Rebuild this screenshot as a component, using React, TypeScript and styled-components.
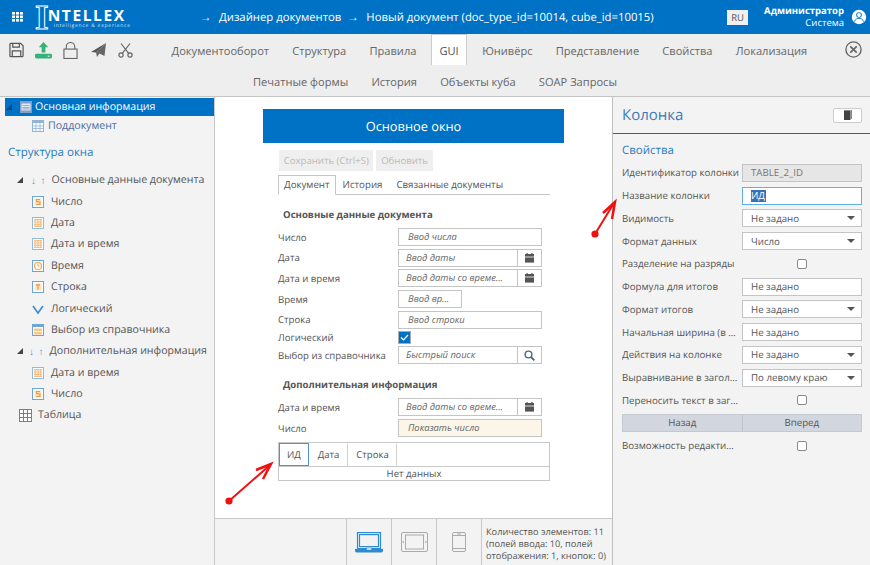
import styled, { createGlobalStyle } from "styled-components";
import { ReactNode } from "react";

const GlobalStyle = createGlobalStyle`
  html, body { margin: 0; padding: 0; }
  body {
    width: 870px;
    height: 565px;
    overflow: hidden;
    background: #fff;
    font-family: "Open Sans", "Liberation Sans", sans-serif;
    font-size: 10.6px;
    color: #555;
    text-rendering: geometricPrecision;
  }
`;

const BLUE = "#0072c6";

function AppsIcon() {
  return (
    <svg width="11" height="10" viewBox="0 0 11 10" fill="#fff">
      {[0, 4, 8].map((x) =>
        [0, 3.5, 7].map((y) => <rect key={`${x}-${y}`} x={x} y={y} width="3" height="2.6" />)
      )}
    </svg>
  );
}

function UserIcon() {
  return (
    <svg width="16" height="16" viewBox="0 0 16 16">
      <circle cx="8" cy="8" r="7.2" fill="#fff" />
      <circle cx="8" cy="6" r="2.8" fill={BLUE} />
      <circle cx="8" cy="6" r="1.9" fill="#fff" />
      <path d="M3.5 12.5c1-2.6 2.6-3.2 4.5-3.2s3.5.6 4.5 3.2" fill="none" stroke={BLUE} strokeWidth="1" />
    </svg>
  );
}

function SaveIcon() {
  return (
    <svg width="15" height="16" viewBox="0 0 16 17" fill="none" stroke="#555" strokeWidth="1.3">
      <path d="M1 2.5a1 1 0 0 1 1-1h10.5L15 4v10.5a1 1 0 0 1-1 1H2a1 1 0 0 1-1-1z" />
      <path d="M4 1.5v4h7v-4M3.5 15.5v-6h9v6" />
    </svg>
  );
}

function UploadIcon() {
  return (
    <svg width="17" height="17" viewBox="0 0 18 18" fill="#35b27a">
      <path d="M9 0l5 5.5h-3V11H7V5.5H4z" />
      <rect x="0" y="12.5" width="18" height="5" rx="1.5" />
      <rect x="13.5" y="14.5" width="2" height="1" fill="#fff" />
    </svg>
  );
}

function LockIcon() {
  return (
    <svg width="15" height="17" viewBox="0 0 16 18" fill="none" stroke="#666" strokeWidth="1.2">
      <rect x="1" y="7.5" width="14" height="10" />
      <path d="M3.5 7.5V5a4.5 4.5 0 0 1 9 0v2.5" />
    </svg>
  );
}

function SendIcon() {
  return (
    <svg width="16" height="14" viewBox="0 0 16 14">
      <path d="M15 0L0 9l5 .5L15 0z" fill="#555" />
      <path d="M15 0L5 9.5 6 14l2.5-3.5L13.5 13z" fill="#666" />
    </svg>
  );
}

function ScissorsIcon() {
  return (
    <svg width="15" height="15" viewBox="0 0 15 15" fill="none" stroke="#666" strokeWidth="1.2">
      <circle cx="3" cy="12" r="2.1" />
      <circle cx="12" cy="12" r="2.1" />
      <path d="M4.3 10.3L12 .5M10.7 10.3L3 .5" />
    </svg>
  );
}

function CloseIcon() {
  return (
    <svg width="17" height="17" viewBox="0 0 17 17" fill="none" stroke="#666" strokeWidth="1.4">
      <circle cx="8.5" cy="8.5" r="7.6" />
      <path d="M5.3 5.3l6.4 6.4M11.7 5.3l-6.4 6.4" strokeWidth="1.7" />
    </svg>
  );
}

function CalendarIcon() {
  return (
    <svg width="9" height="10" viewBox="0 0 9 10" fill="#555">
      <rect x="0" y="1" width="9" height="2.6" />
      <rect x="1.5" y="0" width="1.2" height="1.5" />
      <rect x="6.3" y="0" width="1.2" height="1.5" />
      <rect x="0" y="4.4" width="9" height="5.2" />
    </svg>
  );
}

function SearchIcon() {
  return (
    <svg width="11" height="11" viewBox="0 0 11 11" fill="none" stroke="#4a6a85" strokeWidth="1.4">
      <circle cx="4.5" cy="4.5" r="3.4" />
      <path d="M7 7l3.4 3.4" strokeWidth="1.8" />
    </svg>
  );
}

type NodeKind = "form" | "table" | "number" | "date" | "time" | "text" | "check" | "select" | "grid";

function NodeIcon({ kind }: { kind: NodeKind }) {
  if (kind === "check") {
    return (
      <svg width="12" height="12" viewBox="0 0 12 12" fill="none" stroke="#3d8fd1" strokeWidth="1.7">
        <path d="M1 3l5 7 5-7" />
      </svg>
    );
  }
  if (kind === "grid") {
    return (
      <svg width="13" height="13" viewBox="0 0 13 13" fill="#fff" stroke="#3d8fd1" strokeWidth="1">
        <rect x=".5" y=".5" width="12" height="12" />
        <path d="M4.5.5v12M8.5.5v12M.5 4.5h12M.5 8.5h12" />
      </svg>
    );
  }
  if (kind === "table") {
    return (
      <svg width="12" height="12" viewBox="0 0 12 12">
        <rect x="0" y="0" width="12" height="12" fill="#8fb4d8" />
        <rect x="1" y="3" width="10" height="8" fill="#fff" />
        <path d="M4 3v8M8 3v8M1 6h10M1 8.5h10" stroke="#8fb4d8" strokeWidth=".8" />
      </svg>
    );
  }
  if (kind === "form") {
    return (
      <svg width="12" height="12" viewBox="0 0 12 12">
        <rect x="0" y="0" width="12" height="12" fill="#7f9fc6" />
        <rect x="1.5" y="2.5" width="9" height="7" fill="#dfe8f3" />
        <path d="M2.5 4.5h7M2.5 6.5h7M2.5 8h7" stroke="#7f9fc6" strokeWidth=".8" />
      </svg>
    );
  }
  if (kind === "select") {
    return (
      <svg width="12" height="12" viewBox="0 0 12 12">
        <rect x=".5" y=".5" width="11" height="11" fill="#fff" stroke="#6aa6d8" />
        <rect x="1" y="1" width="10" height="2" fill="#6aa6d8" />
        <rect x="2" y="4.5" width="8" height="6" fill="#fbc48b" />
        <path d="M2 7.5h8" stroke="#fff" />
      </svg>
    );
  }
  if (kind === "time") {
    return (
      <svg width="12" height="12" viewBox="0 0 12 12" fill="none">
        <rect x=".5" y=".5" width="11" height="11" fill="#fff" stroke="#6aa6d8" />
        <circle cx="6" cy="6" r="3.5" stroke="#f3a65d" strokeWidth="1.2" />
        <path d="M6 4v2.2h1.6" stroke="#f3a65d" />
      </svg>
    );
  }
  if (kind === "date") {
    return (
      <svg width="12" height="12" viewBox="0 0 12 12">
        <rect x=".5" y=".5" width="11" height="11" fill="#fff" stroke="#8fbde2" />
        <path d="M2 2.7h8M2 5h8M2 7.3h8M2 9.5h8M3.2 2v8M6 2v8M8.8 2v8" stroke="#f9bd85" strokeWidth="1.2" />
      </svg>
    );
  }
  return (
    <svg width="12" height="12" viewBox="0 0 12 12">
      <rect x=".5" y=".5" width="11" height="11" fill="#fff" stroke="#6aa6d8" />
      <rect x="2.5" y="2.5" width="7" height="7" fill="#fde3c8" />
      {kind === "number" ? (
        <path d="M8 3.5H4.5v2.2H8v2.8H4.2" fill="none" stroke="#ee9640" strokeWidth="1.1" />
      ) : (
        <path d="M4 3.8h4M6 3.8v5" fill="none" stroke="#ee9640" strokeWidth="1.2" />
      )}
    </svg>
  );
}

function LaptopIcon() {
  return (
    <svg width="28" height="21" viewBox="0 0 28 21" fill="none" stroke="#2f8ad0" strokeWidth="1.2">
      <rect x="2.5" y=".6" width="23" height="16" />
      <rect x="4.5" y="2.6" width="19" height="12" />
      <path d="M.6 17.5h26.8v1.2a1.2 1.2 0 0 1-1.2 1.2H1.8a1.2 1.2 0 0 1-1.2-1.2z" fill="#2f8ad0" />
      <rect x="11.5" y="16" width="5" height="2" fill="#fff" strokeWidth=".6" />
    </svg>
  );
}

function TabletIcon() {
  return (
    <svg width="27" height="20" viewBox="0 0 27 20" fill="none" stroke="#aaa" strokeWidth="1">
      <rect x=".5" y=".5" width="26" height="19" rx="1.5" />
      <rect x="4.5" y="3" width="18" height="14" />
      <path d="M1.5 10h1.5M24 10h1.5" strokeWidth="1.5" />
    </svg>
  );
}

function PhoneIcon() {
  return (
    <svg width="14" height="20" viewBox="0 0 14 20" fill="none" stroke="#aaa" strokeWidth="1">
      <rect x=".5" y=".5" width="13" height="19" rx="1.5" />
      <path d="M.5 3.5h13M.5 16.5h13M5 2h4" />
    </svg>
  );
}

function BookIcon() {
  return (
    <svg width="10" height="10" viewBox="0 0 10 10">
      <rect x="1" y="1" width="6.5" height="9" fill="#444" />
      <rect x="7.5" y="0" width="1.5" height="9" fill="#888" />
      <rect x="1" y="0" width="6.5" height="1" fill="#888" />
    </svg>
  );
}

const Page = styled.div`
  position: relative;
  width: 870px;
  height: 565px;
  display: flex;
  flex-direction: column;
  overflow: hidden;
`;

const Header = styled.header`
  height: 34px;
  background: ${BLUE};
  color: #fff;
  display: flex;
  align-items: center;
  flex-shrink: 0;
`;

const AppsButton = styled.div`
  display: flex;
  width: 35px;
  padding-left: 12px;
  box-sizing: border-box;
`;

const Logo = styled.div`
  width: 165px;
  display: flex;
  align-items: center;
  color: #fff;
`;

const LogoI = styled.span`
  font-family: "Liberation Serif", serif;
  font-weight: 700;
  font-size: 35px;
  line-height: 1;
  margin-right: -1px;
  color: ${BLUE};
  -webkit-text-stroke: 1px #fff;
`;

const LogoWords = styled.div`
  display: flex;
  flex-direction: column;
  margin-top: 3px;
`;

const LogoName = styled.span`
  font-weight: 700;
  font-size: 15.5px;
  line-height: 15px;
  letter-spacing: 1.6px;
`;

const LogoTag = styled.span`
  font-size: 5px;
  line-height: 6px;
  letter-spacing: 0.75px;
  padding-left: 6px;
  white-space: nowrap;
  color: #cde3f4;
`;

const Breadcrumb = styled.div`
  flex: 1;
  font-size: 11.3px;
  white-space: nowrap;
`;

const CrumbArrow = styled.span<{ $before?: number }>`
  display: inline-block;
  width: 13px;
  margin: 0 6px 0 ${(p) => p.$before ?? 0}px;
`;

const LangChip = styled.div`
  width: 21px;
  height: 15px;
  background: #f0f0f0;
  color: #555;
  font-size: 9.5px;
  line-height: 15px;
  text-align: center;
  margin-right: 16px;
`;

const UserBlock = styled.div`
  text-align: right;
  font-size: 9.5px;
  line-height: 12px;
  margin-right: 7px;
  b {
    display: block;
    font-weight: 700;
  }
`;

const UserSlot = styled.div`
  display: flex;
  margin-right: 3px;
`;

const Toolbar = styled.div`
  height: 63px;
  background: #eeeeee;
  border-bottom: 1px solid #c4c4c4;
  box-sizing: border-box;
  flex-shrink: 0;
`;

const ToolbarRow = styled.div`
  display: flex;
  height: 31px;
  align-items: center;
`;

const ToolIcons = styled.div`
  width: 160px;
  padding: 1px 0 0 9px;
  box-sizing: border-box;
  display: flex;
  align-items: center;
  gap: 11px;
`;

const SendSlot = styled.div`
  display: flex;
  margin-left: 2px;
`;

const NavTabs = styled.div<{ $center?: boolean }>`
  display: flex;
  height: 31px;
  flex: 1;
  ${(p) => (p.$center ? "justify-content: center;" : "")}
`;

const NavTab = styled.div<{ $active?: boolean }>`
  padding: 0 11.6px;
  line-height: 35px;
  font-size: 11.1px;
  color: #666;
  white-space: nowrap;
  ${(p) =>
    p.$active
      ? "background: #fff; border: 1px solid #ccc; border-width: 1px 1px 0; line-height: 33px; padding: 0; margin: 0 3.5px 0 3px; color: #555; width: 36px; box-sizing: border-box; text-align: center;"
      : ""}
`;

const CloseSlot = styled.div`
  display: flex;
  padding-right: 8px;
`;

const Body = styled.div`
  flex: 1;
  display: flex;
  min-height: 0;
`;

const LeftPanel = styled.aside`
  width: 215px;
  background: #f3f3f3;
  border-right: 1px solid #c8c8c8;
  box-sizing: border-box;
  flex-shrink: 0;
  padding-top: 0.5px;
`;

const SelectedRow = styled.div`
  margin-left: 5px;
  height: 18px;
  box-sizing: border-box;
  background: ${BLUE};
  color: #fff;
  display: flex;
  align-items: center;
  padding: 1px 0 0 1px;
`;

const SelectedTriangle = styled.i`
  width: 0;
  height: 0;
  border-style: solid;
  border-width: 0 0 6px 6px;
  border-color: transparent transparent #08467a transparent;
  margin-right: 8px;
`;

const SelectedIcon = styled.div`
  display: flex;
  margin-right: 3px;
`;

const SubRow = styled.div`
  display: flex;
  align-items: center;
  gap: 4px;
  height: 18px;
  padding: 1px 0 0 32px;
  color: #4a6fa5;
`;

const StructureTitle = styled.div`
  color: #2b7cc0;
  font-size: 11.5px;
  margin: 9px 0 9px 8px;
  line-height: 17px;
`;

const TreeRow = styled.div<{ $indent: number; $gap?: number }>`
  display: flex;
  align-items: center;
  gap: ${(p) => p.$gap ?? 7}px;
  height: 21.4px;
  padding-left: ${(p) => p.$indent}px;
  white-space: nowrap;
`;

const Triangle = styled.i`
  width: 0;
  height: 0;
  border-style: solid;
  border-width: 0 0 6px 6px;
  border-color: transparent transparent #444 transparent;
`;

const SortArrows = styled.span<{ $left: number; $after: number }>`
  color: #4c93d0;
  font-size: 10px;
  word-spacing: 2px;
  margin: 0 ${(p) => p.$after}px 0 ${(p) => p.$left}px;
`;

const Center = styled.main`
  flex: 1;
  display: flex;
  flex-direction: column;
  background: #fff;
  min-width: 0;
`;

const Canvas = styled.div`
  flex: 1;
  padding: 12px 0 0 48px;
  width: 350px;
`;

const WindowTitle = styled.div`
  width: 301px;
  height: 34px;
  background: ${BLUE};
  color: #fff;
  font-size: 12.8px;
  line-height: 34px;
  text-align: center;
`;

const FormBody = styled.div`
  margin-left: 15px;
  width: 272px;
`;

const ButtonsRow = styled.div`
  display: flex;
  gap: 3px;
  margin: 7px 0 4px 1px;
`;

const GhostButton = styled.div`
  background: #efefef;
  color: #bbb;
  height: 21px;
  line-height: 21px;
  padding: 0 4.7px;
  font-size: 9.6px;
  white-space: nowrap;
`;

const FormTabs = styled.div`
  display: flex;
  border-bottom: 1px solid #c4c4c4;
  height: 19px;
`;

const FormTab = styled.div<{ $active?: boolean }>`
  font-size: 9.7px;
  line-height: 19px;
  padding: 0 7px;
  white-space: nowrap;
  ${(p) =>
    p.$active
      ? "background: #fff; border: 1px solid #c4c4c4; border-bottom: 1px solid #fff; line-height: 18px; padding: 0 5px; height: 18px;"
      : ""}
`;

const SectionTitle = styled.div<{ $top: number }>`
  font-weight: 700;
  font-size: 9.6px;
  margin: ${(p) => p.$top}px 0 6px 5px;
  line-height: 14px;
`;

const FieldRow = styled.div<{ $compact?: boolean }>`
  display: grid;
  grid-template-columns: 120px auto;
  justify-content: start;
  align-items: center;
  min-height: ${(p) => (p.$compact ? 13 : 18)}px;
  margin-bottom: ${(p) => (p.$compact ? 2 : 2.7)}px;
  font-size: 9.6px;
  white-space: nowrap;
`;

const FieldBox = styled.div<{ $width?: number; $filled?: boolean }>`
  width: ${(p) => p.$width ?? 144}px;
  height: 18px;
  box-sizing: border-box;
  border: 1px solid #c4c4c4;
  background: ${(p) => (p.$filled ? "#fbf6e8" : "#fff")};
  display: flex;
  font-style: italic;
  font-size: 9.4px;
  line-height: 16px;
  color: #666;
`;

const BoxText = styled.div<{ $tight?: boolean }>`
  flex: 1;
  padding-left: ${(p) => (p.$tight ? 7 : 9)}px;
  overflow: hidden;
  white-space: nowrap;
`;

const BoxAddon = styled.div`
  width: 23px;
  border-left: 1px solid #c4c4c4;
  display: flex;
  align-items: center;
  justify-content: center;
`;

const CheckedBox = styled.div`
  width: 13px;
  height: 13px;
  box-sizing: border-box;
  background: ${BLUE};
  border: 1px solid #aaa;
  display: flex;
  align-items: center;
  justify-content: center;
`;

const DataTable = styled.div`
  margin-top: 4.5px;
  border: 1px solid #c8c8c8;
  box-sizing: border-box;
  width: 272px;
`;

const TableHead = styled.div`
  display: flex;
  height: 23px;
  border-bottom: 1px solid #c8c8c8;
  font-size: 9.6px;
`;

const HeadCell = styled.div<{ $width: number; $selected?: boolean }>`
  width: ${(p) => p.$width}px;
  box-sizing: border-box;
  text-align: center;
  line-height: 21px;
  border: 1px solid ${(p) => (p.$selected ? "#4b94cf" : "transparent")};
  border-right: 1px solid ${(p) => (p.$selected ? "#4b94cf" : "#d0d0d0")};
`;

const EmptyRow = styled.div`
  height: 13px;
  line-height: 13px;
  text-align: center;
  font-size: 9.6px;
`;

const DeviceBar = styled.div`
  height: 47px;
  background: #f3f3f3;
  border-top: 1px solid #c8c8c8;
  box-sizing: border-box;
  display: flex;
  justify-content: flex-end;
`;

const DeviceCell = styled.div`
  width: 45px;
  border-left: 1px solid #c8c8c8;
  display: flex;
  align-items: center;
  justify-content: center;
  box-sizing: border-box;
`;

const DeviceInfo = styled.div`
  width: 131px;
  border-left: 1px solid #c8c8c8;
  box-sizing: border-box;
  padding: 7px 0 0 4px;
  font-size: 9.2px;
  line-height: 12px;
  white-space: nowrap;
`;

const RightPanel = styled.aside`
  width: 258px;
  background: #f3f3f3;
  border-left: 1px solid #c0c0c0;
  box-sizing: border-box;
  flex-shrink: 0;
`;

const PanelHead = styled.div`
  height: 37px;
  border-bottom: 1.5px solid ${BLUE};
  box-sizing: border-box;
  display: flex;
  align-items: center;
  justify-content: space-between;
  padding: 0 8px 0 9px;
`;

const PanelTitle = styled.div`
  font-size: 15px;
  color: #3a7ab8;
`;

const PanelButton = styled.div`
  width: 29px;
  height: 15px;
  background: #fff;
  border: 1px solid #ccc;
  border-radius: 2px;
  box-sizing: border-box;
  display: flex;
  align-items: center;
  justify-content: center;
`;

const PropsTitle = styled.div`
  color: #2b7cc0;
  font-size: 11.5px;
  line-height: 16px;
  margin: 9px 0 2.5px 9px;
`;

const PropRow = styled.div`
  display: grid;
  grid-template-columns: 120px 120px;
  padding-left: 9px;
  align-items: center;
  height: 22.75px;
  font-size: 9.7px;
  white-space: nowrap;
`;

const PropLabel = styled.div`
  overflow: hidden;
  white-space: nowrap;
`;

const PropInput = styled.div<{ $variant?: "disabled" | "focus" }>`
  height: 18px;
  box-sizing: border-box;
  border: 1px solid ${(p) => (p.$variant === "focus" ? "#5fb0ea" : "#c4c4c4")};
  background: ${(p) => (p.$variant === "disabled" ? "#e6e6e6" : "#fff")};
  color: ${(p) => (p.$variant === "disabled" ? "#777" : "#555")};
  padding-left: 8px;
  font-size: 9.7px;
  display: flex;
  align-items: center;
  justify-content: space-between;
`;

const SelectedText = styled.span`
  background: #3a70b8;
  color: #fff;
  line-height: 12px;
  padding-right: 1px;
`;

const Caret = styled.i`
  width: 0;
  height: 0;
  border-style: solid;
  border-width: 4px 4px 0 4px;
  border-color: #555 transparent transparent transparent;
  margin-right: 6px;
`;

const CheckSlot = styled.div`
  display: flex;
  justify-content: center;
`;

const CheckBox = styled.div`
  width: 10px;
  height: 10px;
  box-sizing: border-box;
  border: 1px solid #888;
  border-radius: 2px;
  background: #fff;
`;

const PagerRow = styled.div`
  display: flex;
  margin: 2.5px 8px 2px 9px;
  height: 18px;
  border: 1px solid #c4c8d0;
  box-sizing: border-box;
  background: #d2d6df;
`;

const PagerButton = styled.div`
  flex: 1;
  text-align: center;
  line-height: 16px;
  font-size: 9.7px;
  & + & {
    border-left: 1px solid #c0c4cc;
  }
`;

const Annotations = styled.svg`
  position: absolute;
  inset: 0;
  pointer-events: none;
`;

function Field({
  label,
  text,
  width,
  addon,
  filled,
  tight,
}: {
  label: string;
  text: string;
  width?: number;
  addon?: ReactNode;
  filled?: boolean;
  tight?: boolean;
}) {
  return (
    <FieldRow>
      <span>{label}</span>
      <FieldBox $width={width} $filled={filled}>
        <BoxText $tight={tight}>{text}</BoxText>
        {addon && <BoxAddon>{addon}</BoxAddon>}
      </FieldBox>
    </FieldRow>
  );
}

function Prop({ label, value, select }: { label: string; value: string; select?: boolean }) {
  return (
    <PropRow>
      <PropLabel>{label}</PropLabel>
      <PropInput>
        {value}
        {select && <Caret />}
      </PropInput>
    </PropRow>
  );
}

function PropCheck({ label }: { label: string }) {
  return (
    <PropRow>
      <PropLabel>{label}</PropLabel>
      <CheckSlot>
        <CheckBox />
      </CheckSlot>
    </PropRow>
  );
}

function Tree() {
  const first: [string, NodeKind][] = [
    ["Число", "number"],
    ["Дата", "date"],
    ["Дата и время", "date"],
    ["Время", "time"],
    ["Строка", "text"],
    ["Логический", "check"],
    ["Выбор из справочника", "select"],
  ];
  return (
    <>
      <TreeRow $indent={17} $gap={0}>
        <Triangle />
        <SortArrows $left={8} $after={6}>↓ ↑</SortArrows>
        Основные данные документа
      </TreeRow>
      {first.map(([name, kind]) => (
        <TreeRow key={name} $indent={32} $gap={7}>
          <NodeIcon kind={kind} />
          {name}
        </TreeRow>
      ))}
      <TreeRow $indent={17} $gap={0}>
        <Triangle />
        <SortArrows $left={6} $after={6}>↓ ↑</SortArrows>
        Дополнительная информация
      </TreeRow>
      <TreeRow $indent={32} $gap={7}>
        <NodeIcon kind="date" />
        Дата и время
      </TreeRow>
      <TreeRow $indent={32} $gap={7}>
        <NodeIcon kind="number" />
        Число
      </TreeRow>
      <TreeRow $indent={19} $gap={6}>
        <NodeIcon kind="grid" />
        Таблица
      </TreeRow>
    </>
  );
}

export default function App() {
  return (
    <Page>
      <GlobalStyle />
      <Header>
        <AppsButton>
          <AppsIcon />
        </AppsButton>
        <Logo>
          <LogoI>I</LogoI>
          <LogoWords>
            <LogoName>NTELLEX</LogoName>
            <LogoTag>intelligence &amp; experience</LogoTag>
          </LogoWords>
        </Logo>
        <Breadcrumb>
          <CrumbArrow>→</CrumbArrow>Дизайнер документов<CrumbArrow $before={6}>→</CrumbArrow>Новый документ
          (doc_type_id=10014, cube_id=10015)
        </Breadcrumb>
        <LangChip>RU</LangChip>
        <UserBlock>
          <b>Администратор</b>
          Система
        </UserBlock>
        <UserSlot>
          <UserIcon />
        </UserSlot>
      </Header>

      <Toolbar>
        <ToolbarRow>
          <ToolIcons>
            <SaveIcon />
            <UploadIcon />
            <LockIcon />
            <SendSlot>
              <SendIcon />
            </SendSlot>
            <ScissorsIcon />
          </ToolIcons>
          <NavTabs>
            <NavTab>Документооборот</NavTab>
            <NavTab>Структура</NavTab>
            <NavTab>Правила</NavTab>
            <NavTab $active>GUI</NavTab>
            <NavTab>Юнивёрс</NavTab>
            <NavTab>Представление</NavTab>
            <NavTab>Свойства</NavTab>
            <NavTab>Локализация</NavTab>
          </NavTabs>
          <CloseSlot>
            <CloseIcon />
          </CloseSlot>
        </ToolbarRow>
        <ToolbarRow>
          <NavTabs $center>
            <NavTab>Печатные формы</NavTab>
            <NavTab>История</NavTab>
            <NavTab>Объекты куба</NavTab>
            <NavTab>SOAP Запросы</NavTab>
          </NavTabs>
        </ToolbarRow>
      </Toolbar>

      <Body>
        <LeftPanel>
          <SelectedRow>
            <SelectedTriangle />
            <SelectedIcon>
              <NodeIcon kind="form" />
            </SelectedIcon>
            Основная информация
          </SelectedRow>
          <SubRow>
            <NodeIcon kind="table" />
            Поддокумент
          </SubRow>
          <StructureTitle>Структура окна</StructureTitle>
          <Tree />
        </LeftPanel>

        <Center>
          <Canvas>
            <WindowTitle>Основное окно</WindowTitle>
            <FormBody>
              <ButtonsRow>
                <GhostButton>Сохранить (Ctrl+S)</GhostButton>
                <GhostButton>Обновить</GhostButton>
              </ButtonsRow>
              <FormTabs>
                <FormTab $active>Документ</FormTab>
                <FormTab>История</FormTab>
                <FormTab>Связанные документы</FormTab>
              </FormTabs>
              <SectionTitle $top={13}>Основные данные документа</SectionTitle>
              <Field label="Число" text="Ввод числа" />
              <Field label="Дата" text="Ввод даты" tight addon={<CalendarIcon />} />
              <Field label="Дата и время" text="Ввод даты со време..." tight addon={<CalendarIcon />} />
              <Field label="Время" text="Ввод вр..." width={64} />
              <Field label="Строка" text="Ввод строки" />
              <FieldRow $compact>
                <span>Логический</span>
                <CheckedBox>
                  <svg width="9" height="7" viewBox="0 0 9 7" fill="none" stroke="#fff" strokeWidth="1.2">
                    <path d="M1 3.5l2.5 2.5L8 1" />
                  </svg>
                </CheckedBox>
              </FieldRow>
              <Field label="Выбор из справочника" text="Быстрый поиск" tight addon={<SearchIcon />} />
              <SectionTitle $top={14}>Дополнительная информация</SectionTitle>
              <Field label="Дата и время" text="Ввод даты со време..." tight addon={<CalendarIcon />} />
              <Field label="Число" text="Показать число" filled />
              <DataTable>
                <TableHead>
                  <HeadCell $width={30} $selected>
                    ИД
                  </HeadCell>
                  <HeadCell $width={39}>Дата</HeadCell>
                  <HeadCell $width={49}>Строка</HeadCell>
                </TableHead>
                <EmptyRow>Нет данных</EmptyRow>
              </DataTable>
            </FormBody>
          </Canvas>
          <DeviceBar>
            <DeviceCell>
              <LaptopIcon />
            </DeviceCell>
            <DeviceCell>
              <TabletIcon />
            </DeviceCell>
            <DeviceCell>
              <PhoneIcon />
            </DeviceCell>
            <DeviceInfo>
              Количество элементов: 11
              <br />
              (полей ввода: 10, полей
              <br />
              отображения: 1, кнопок: 0)
            </DeviceInfo>
          </DeviceBar>
        </Center>

        <RightPanel>
          <PanelHead>
            <PanelTitle>Колонка</PanelTitle>
            <PanelButton>
              <BookIcon />
            </PanelButton>
          </PanelHead>
          <PropsTitle>Свойства</PropsTitle>
          <PropRow>
            <PropLabel>Идентификатор колонки</PropLabel>
            <PropInput $variant="disabled">TABLE_2_ID</PropInput>
          </PropRow>
          <PropRow>
            <PropLabel>Название колонки</PropLabel>
            <PropInput $variant="focus">
              <SelectedText>ИД</SelectedText>
            </PropInput>
          </PropRow>
          <Prop label="Видимость" value="Не задано" select />
          <Prop label="Формат данных" value="Число" select />
          <PropCheck label="Разделение на разряды" />
          <Prop label="Формула для итогов" value="Не задано" />
          <Prop label="Формат итогов" value="Не задано" select />
          <Prop label="Начальная ширина (в ..." value="Не задано" />
          <Prop label="Действия на колонке" value="Не задано" select />
          <Prop label="Выравнивание в загол..." value="По левому краю" select />
          <PropCheck label="Переносить текст в заг..." />
          <PagerRow>
            <PagerButton>Назад</PagerButton>
            <PagerButton>Вперед</PagerButton>
          </PagerRow>
          <PropCheck label="Возможность редакти..." />
        </RightPanel>
      </Body>

      <Annotations width="870" height="565" viewBox="0 0 870 565" fill="none" stroke="#f01010" strokeWidth="2">
        <circle cx="229" cy="501" r="2.6" fill="#f01010" />
        <path d="M229 501L270 465" />
        <path d="M256 470L271 464L263 479" strokeWidth="2.5" />
        <circle cx="595" cy="234" r="2.6" fill="#f01010" />
        <path d="M595 234L614 203" />
        <path d="M603 213L615 202L612 219" strokeWidth="2.5" />
      </Annotations>
    </Page>
  );
}
